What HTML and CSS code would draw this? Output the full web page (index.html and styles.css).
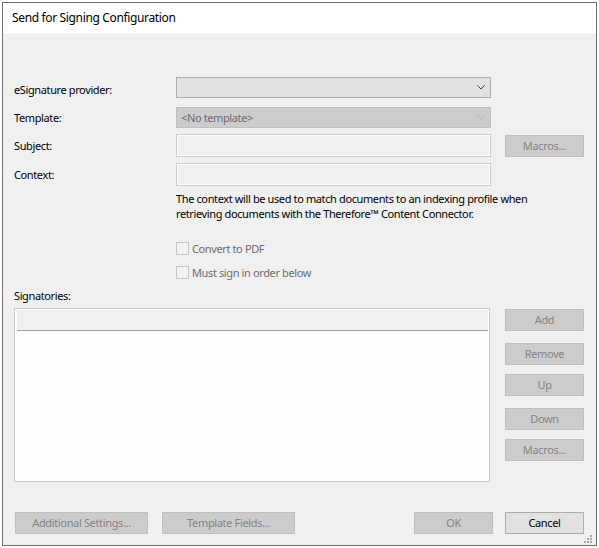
FILE: index.html
```html
<!DOCTYPE html>
<html lang="en">
<head>
<meta charset="utf-8">
<title>Send for Signing Configuration</title>
<link rel="stylesheet" href="styles.css">
</head>
<body>
<div class="window">
  <div class="titlebar">Send for Signing Configuration</div>
  <div class="body">
    <div class="row r1">
      <span class="lbl lbl-first">eSignature provider:</span>
      <div class="combo">
        <span class="combo-text"></span>
        <svg class="chev" width="8" height="5" viewBox="0 0 8 5"><polyline points="0.5,0.5 4,4 7.5,0.5" fill="none" stroke="#3c3c3c" stroke-width="1"/></svg>
      </div>
    </div>
    <div class="row r2">
      <span class="lbl">Template:</span>
      <div class="combo combo-disabled">
        <span class="combo-text">&lt;No template&gt;</span>
        <svg class="chev" width="8" height="5" viewBox="0 0 8 5"><polyline points="0.5,0.5 4,4 7.5,0.5" fill="none" stroke="#b4b4b4" stroke-width="1"/></svg>
      </div>
    </div>
    <div class="row r3">
      <span class="lbl">Subject:</span>
      <div class="textbox"></div>
      <button class="btn btn-disabled btn-row">Macros...</button>
    </div>
    <div class="row r4">
      <span class="lbl">Context:</span>
      <div class="textbox"></div>
    </div>
    <p class="note">The context will be used to match documents to an indexing profile when<br>retrieving documents with the Therefore™ Content Connector.</p>
    <div class="check c1"><span class="box"></span><span class="check-text">Convert to PDF</span></div>
    <div class="check c2"><span class="box"></span><span class="check-text">Must sign in order below</span></div>
    <div class="sig-label">Signatories:</div>
    <div class="sig">
      <div class="list"><div class="list-header"></div></div>
      <div class="side">
        <button class="btn btn-disabled">Add</button>
        <button class="btn btn-disabled s-remove">Remove</button>
        <button class="btn btn-disabled s-up">Up</button>
        <button class="btn btn-disabled s-down">Down</button>
        <button class="btn btn-disabled s-macros">Macros...</button>
      </div>
    </div>
    <div class="footer">
      <button class="btn btn-disabled btn-wide f-additional">Additional Settings...</button>
      <button class="btn btn-disabled btn-wide f-template">Template Fields...</button>
      <button class="btn btn-disabled f-ok">OK</button>
      <button class="btn btn-normal f-cancel">Cancel</button>
    </div>
  </div>
  <svg class="grip" width="9" height="9" viewBox="0 0 9 9">
    <rect x="6" y="0" width="2" height="2" fill="#a6a6a6"/>
    <rect x="3" y="3" width="2" height="2" fill="#a6a6a6"/>
    <rect x="6" y="3" width="2" height="2" fill="#a6a6a6"/>
    <rect x="0" y="6" width="2" height="2" fill="#a6a6a6"/>
    <rect x="3" y="6" width="2" height="2" fill="#a6a6a6"/>
    <rect x="6" y="6" width="2" height="2" fill="#a6a6a6"/>
  </svg>
</div>
</body>
</html>
```
FILE: styles.css
```css
* { box-sizing: border-box; }
html, body {
  margin: 0;
  padding: 0;
  background: #ffffff;
}
body {
  font-family: "Noto Sans", "Open Sans", sans-serif;
  font-size: 11px;
  letter-spacing: -0.38px;
  color: #000;
}
.window {
  position: relative;
  margin: 2px;
  width: 595px;
  height: 544px;
  border: 1px solid #707070;
  display: flex;
  flex-direction: column;
  background: #f0f0f0;
}
.titlebar {
  height: 30px;
  line-height: 30px;
  background: #ffffff;
  padding-left: 9px;
  font-size: 12px;
  letter-spacing: -0.35px;
  flex: none;
}
.body {
  flex: 1;
  padding: 44px 12px 0 11px;
  display: flex;
  flex-direction: column;
}
.row {
  display: grid;
  grid-template-columns: 148px 315px 79px;
  column-gap: 14px;
  align-items: center;
}
.r1 { height: 21px; }
.r2 { height: 21px; margin-top: 9px; }
.r3 { height: 23px; margin-top: 6px; }
.r4 { height: 23px; margin-top: 6px; }
.lbl { line-height: 16px; }
.lbl-first { position: relative; top: 2px; }
.combo {
  height: 21px;
  border: 1px solid #adadad;
  background: #e1e1e1;
  display: flex;
  align-items: center;
  justify-content: space-between;
  padding: 0 5px 0 4px;
}
.combo-disabled {
  background: #cccccc;
  border-color: #bfbfbf;
}
.combo-text { color: #6d6d6d; }
.chev { display: block; }
.textbox {
  height: 23px;
  border: 1px solid #cccccc;
  box-shadow: inset 0 0 0 1px #ffffff;
  background: #f0f0f0;
}
.btn {
  font-family: inherit;
  font-size: 11px;
  letter-spacing: -0.35px;
  height: 22px;
  width: 79px;
  margin: 0;
  padding: 0;
  line-height: 18px;
  text-align: center;
}
.btn-disabled {
  background: #cccccc;
  border: 1px solid #bfbfbf;
  color: #838383;
}
.btn-normal {
  background: #e1e1e1;
  border: 1px solid #adadad;
  color: #000;
}
.btn-row { align-self: start; margin-top: 1px; }
.note {
  margin: 5px 0 0 162px;
  line-height: 15px;
}
.check {
  margin-left: 162px;
  height: 13px;
  display: flex;
  align-items: center;
}
.c1 { margin-top: 21px; }
.c2 { margin-top: 11px; }
.box {
  width: 13px;
  height: 13px;
  border: 1px solid #c6c6c6;
  background: #f3f3f3;
  flex: none;
}
.check-text {
  margin-left: 3px;
  color: #6d6d6d;
  line-height: 16px;
}
.sig-label {
  margin-top: 9px;
  line-height: 16px;
}
.sig {
  margin-top: 4px;
  display: flex;
  justify-content: space-between;
  align-items: flex-start;
}
.list {
  width: 476px;
  height: 174px;
  border: 1px solid #c8c8c8;
  background: #fdfdfd;
  padding: 1px 1px 0 2px;
}
.list-header {
  height: 21px;
  background: #f0f0f0;
  border-bottom: 1px solid #a0a0a0;
}
.side {
  margin-top: 1px;
  display: flex;
  flex-direction: column;
}
.s-remove { margin-top: 12px; }
.s-up { margin-top: 9px; }
.s-down { margin-top: 12px; }
.s-macros { margin-top: 9px; }
.footer {
  margin-top: 30px;
  display: flex;
}
.btn-wide { width: 133px; }
.f-additional { margin-left: 1px; }
.f-template { margin-left: 14px; }
.f-ok { margin-left: auto; }
.f-cancel { margin-left: 12px; }
.grip {
  position: absolute;
  right: 3px;
  bottom: 1px;
  display: block;
}
```
